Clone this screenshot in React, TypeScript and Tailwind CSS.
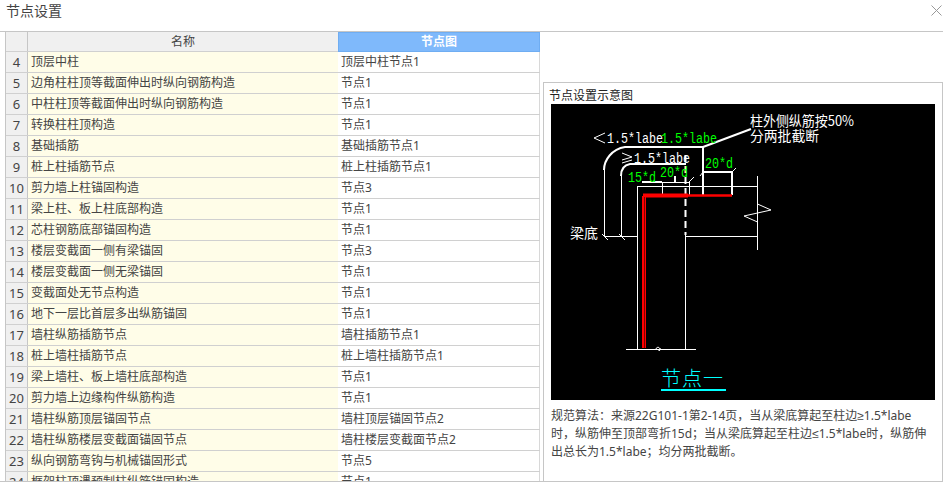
const rows = [
  [4, "顶层中柱", "顶层中柱节点1"],
  [5, "边角柱柱顶等截面伸出时纵向钢筋构造", "节点1"],
  [6, "中柱柱顶等截面伸出时纵向钢筋构造", "节点1"],
  [7, "转换柱柱顶构造", "节点1"],
  [8, "基础插筋", "基础插筋节点1"],
  [9, "桩上柱插筋节点", "桩上柱插筋节点1"],
  [10, "剪力墙上柱锚固构造", "节点3"],
  [11, "梁上柱、板上柱底部构造", "节点1"],
  [12, "芯柱钢筋底部锚固构造", "节点1"],
  [13, "楼层变截面一侧有梁锚固", "节点3"],
  [14, "楼层变截面一侧无梁锚固", "节点1"],
  [15, "变截面处无节点构造", "节点1"],
  [16, "地下一层比首层多出纵筋锚固", "节点1"],
  [17, "墙柱纵筋插筋节点", "墙柱插筋节点1"],
  [18, "桩上墙柱插筋节点", "桩上墙柱插筋节点1"],
  [19, "梁上墙柱、板上墙柱底部构造", "节点1"],
  [20, "剪力墙上边缘构件纵筋构造", "节点1"],
  [21, "墙柱纵筋顶层锚固节点", "墙柱顶层锚固节点2"],
  [22, "墙柱纵筋楼层变截面锚固节点", "墙柱楼层变截面节点2"],
  [23, "纵向钢筋弯钩与机械锚固形式", "节点5"],
  [24, "框架柱顶遇预制柱纵筋锚固构造", "节点1"],
]

const cad = "font-['Liberation_Mono',monospace] text-[14px]"
const sign = "font-['Liberation_Sans',sans-serif]"

const NodeDrawing = () => (
  <svg viewBox="551 104 384 296" className="block h-[296px] w-[384px] bg-black">
    <g fill="none" stroke="#fff" strokeWidth="1">
      <path d="M604.500 170V236.500H637M621.500 176V236.500M602 234l6 6M619 234l6 6" />
      <path d="M637.500 186V349M685.500 235V349M637 186.500H757M757.500 176V250M685 236.500H757" />
      <path d="M757.500 204L771 210L744 216L757.500 222" />
      <path d="M626 349.500H696" />
      <path d="M662.500 182V194M689.500 182V195M694 177l-5 5M736 168l-4 4" />
      <path d="M656 349a2 2 0 1 1 3 2v-2h2" />
    </g>
    <g fill="none" stroke="#fff" strokeWidth="2">
      <path d="M604 170C604 160 612 149 625 147H703V195" />
      <path d="M703 147L751 129" />
      <path d="M621 176C621 169 624 165 630 164H686" />
      <path d="M642 182H662" />
      <path d="M675 176V182" />
      <path d="M703 172H732V195" />
      <path d="M685.500 155V235" strokeDasharray="7 4" />
    </g>
    <path d="M662 182.500H689M703 172L700 176" stroke="#fff" fill="none" />
    <path d="M643 195.500H688" stroke="#f00" strokeWidth="4" fill="none" />
    <path d="M688 195.500H732" stroke="#f00" strokeWidth="2.500" fill="none" />
    <path d="M643 196V348" stroke="#f00" strokeWidth="2" fill="none" />
    <path d="M644.500 198V348" stroke="#800000" strokeWidth="1" fill="none" />
    <path d="M645.500 196V348" stroke="#f00" strokeWidth="1" fill="none" />
    <g className={cad} fill="#fff">
      <path d="M605 133L594 138L605 143" stroke="#fff" fill="none" />
      <text x="607" y="143" textLength="56" lengthAdjust="spacingAndGlyphs">1.5*labe</text>
      <path d="M622 153L632 157L622 160M622 163L632 160" stroke="#fff" fill="none" />
      <text x="634" y="163" textLength="56" lengthAdjust="spacingAndGlyphs">1.5*labe</text>
    </g>
    <g className={cad} fill="#00ff00">
      <text x="661" y="143" textLength="56" lengthAdjust="spacingAndGlyphs">1.5*labe</text>
      <text x="628" y="182" textLength="28" lengthAdjust="spacingAndGlyphs">15*d</text>
      <text x="660" y="177" textLength="28" lengthAdjust="spacingAndGlyphs">20*d</text>
      <text x="705" y="168" textLength="28" lengthAdjust="spacingAndGlyphs">20*d</text>
    </g>
    <g className="font-['Noto_Sans_CJK_SC',sans-serif] text-[14px]" fill="#fff">
      <text x="750" y="126" textLength="104" lengthAdjust="spacingAndGlyphs">柱外侧纵筋按50%</text>
      <text x="750" y="141" textLength="69" lengthAdjust="spacingAndGlyphs">分两批截断</text>
      <text x="570" y="238">梁底</text>
    </g>
    <text x="661" y="386" fill="#00ffff" className="font-['Noto_Sans_CJK_SC',sans-serif] text-[20px] font-light tracking-[1px]">
      节点一
    </text>
    <path d="M661 390H726" stroke="#00ffff" strokeWidth="2" />
  </svg>
)

const App = () => {
  return (
    <div className="flex h-[488px] w-[943px] flex-col overflow-hidden bg-white font-['Noto_Sans','Noto_Sans_CJK_SC',sans-serif] text-xs text-[#444]">
      <div className="flex h-[31px] shrink-0 items-start justify-between pl-[6px] pr-[1px] pt-[1px]">
        <span className="text-sm leading-[20px]">节点设置</span>
        <svg viewBox="0 0 11 11" className="mt-[4px] h-[11px] w-[11px]">
          <path d="M0.500 0.500L10.500 10.500M10.500 0.500L0.500 10.500" stroke="#999" fill="none" />
        </svg>
      </div>
      <div className="flex h-[451px] shrink-0 border-y border-[#c6c6c6]">
        <div className="ml-[5px] h-full w-[535px] overflow-hidden border-l border-[#c6c6c6]">
          <div className="flex h-[19px] items-center">
            <div className="h-full w-[22px] shrink-0 border-r border-[#c6c6c6] bg-[#f0f0f0]" />
            <div className="h-full w-[310px] shrink-0 bg-[#f0f0f0] text-center leading-[20px]">名称</div>
            <div className="h-[20px] w-[202px] shrink-0 self-start border border-[#6fadf2] bg-[#7fb9fb] text-center font-bold leading-[18px] text-white">
              节点图
            </div>
          </div>
          {rows.map(([num, name, node]) => (
            <div key={num} className="flex h-[21px] border-t border-[#d0d0d0]">
              <div className="w-[22px] shrink-0 border-r border-[#c6c6c6] bg-[#f0f0f0] text-center text-[13px] leading-[20px]">
                {num}
              </div>
              <div className="w-[310px] shrink-0 bg-[#fffde8] pl-[3px] leading-[20px]">{name}</div>
              <div className="w-[202px] shrink-0 border-r border-[#d8d8d8] pl-[3px] leading-[20px]">{node}</div>
            </div>
          ))}
        </div>
        <div className="ml-[3px] mt-[50px] flex w-[400px] flex-col border-x border-t border-[#c6c6c6] pl-[7px] pt-[5px]">
          <div className="-ml-[2px] h-[16px] text-xs leading-[16px] text-[#222]">节点设置示意图</div>
          <NodeDrawing />
          <p className="mt-[7px] leading-[17px]">
            规范算法&#xFF1A;来源22G101-1第2-14页&#xFF0C;当从梁底算起至柱边<span className={sign}>≥</span>1.5*labe
            <br />
            时&#xFF0C;纵筋伸至顶部弯折15d&#xFF1B;当从梁底算起至柱边<span className={sign}>≤</span>1.5*labe时&#xFF0C;纵筋伸
            <br />
            出总长为1.5*labe&#xFF1B;均分两批截断。
          </p>
        </div>
      </div>
    </div>
  )
}

export default App
